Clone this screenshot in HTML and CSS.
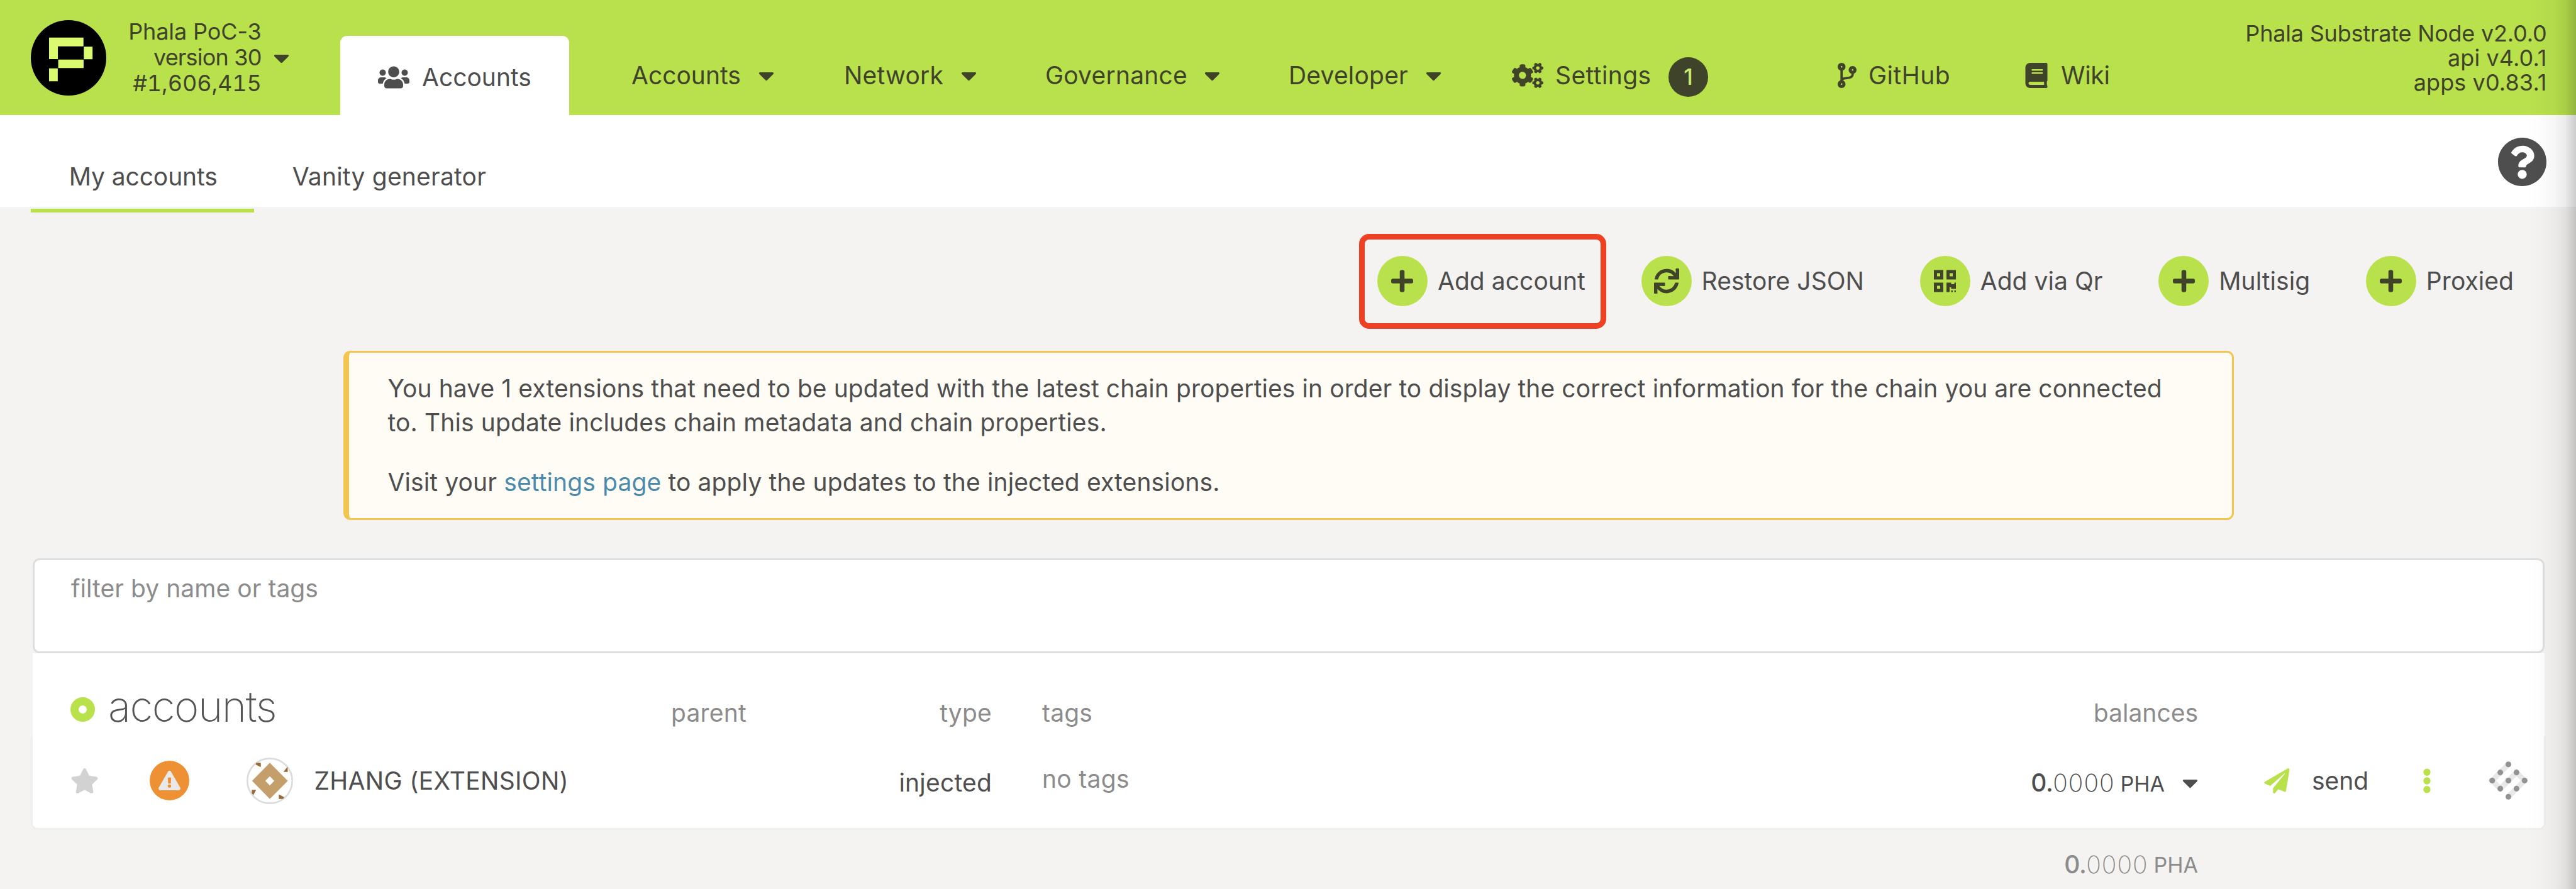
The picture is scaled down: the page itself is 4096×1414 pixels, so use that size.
FILE: index.html
```html
<!DOCTYPE html>
<html lang="en">
<head>
<meta charset="utf-8">
<title>Accounts</title>
<link rel="stylesheet" href="styles.css">
</head>
<body>
<svg class="sprite" aria-hidden="true">
  <symbol id="caret" viewBox="0 0 320 512"><path d="M31.3 192h257.3c17.8 0 26.7 21.5 14.1 34.1L174.1 354.8c-7.8 7.8-20.5 7.8-28.3 0L17.2 226.1C4.6 213.5 13.5 192 31.3 192z"/></symbol>
  <symbol id="plus" viewBox="0 0 448 512"><path d="M416 208H272V64c0-17.67-14.33-32-32-32h-32c-17.67 0-32 14.33-32 32v144H32c-17.67 0-32 14.33-32 32v32c0 17.67 14.33 32 32 32h144v144c0 17.67 14.33 32 32 32h32c17.67 0 32-14.33 32-32V304h144c17.67 0 32-14.33 32-32v-32c0-17.67-14.33-32-32-32z"/></symbol>
</svg>

<header class="topbar">
  <div class="brand">
    <svg class="logo" viewBox="68 44 168 168"><circle cx="152" cy="128" r="84"/><path class="logo-mark" d="M108.6 82.7h76.6v19.6h-56.9v28.4h-19.7zM186 103.2h19.4v28H186zM129 132h56.5v18.8H129zM108.6 151.6H128V180h-19.4z"/></svg>
    <div class="chain"><div class="t-phala">Phala PoC-3</div><div class="t-version">version 30</div><div class="t-block">#1,606,415</div></div>
    <svg class="caret"><use href="#caret"/></svg>
  </div>
  <nav class="nav">
    <a class="nav-tab"><svg class="i-users" viewBox="0 0 640 512"><path d="M96 224c35.3 0 64-28.7 64-64s-28.7-64-64-64-64 28.7-64 64 28.7 64 64 64zm448 0c35.3 0 64-28.7 64-64s-28.7-64-64-64-64 28.7-64 64 28.7 64 64 64zm32 32h-64c-17.6 0-33.5 7.1-45.1 18.6 40.3 22.1 68.9 62 75.1 109.4h66c17.7 0 32-14.3 32-32v-32c0-35.3-28.7-64-64-64zm-256 0c61.9 0 112-50.1 112-112S381.9 32 320 32 208 82.1 208 144s50.1 112 112 112zm76.8 32h-8.3c-20.8 10-43.9 16-68.5 16s-47.6-6-68.5-16h-8.3C179.6 288 128 339.6 128 403.2V432c0 26.5 21.5 48 48 48h288c26.5 0 48-21.5 48-48v-28.8c0-63.6-51.6-115.2-115.2-115.2zm-223.7-13.4C161.5 263.1 145.6 256 128 256H64c-35.3 0-64 28.7-64 64v32c0 17.7 14.3 32 32 32h65.9c6.3-47.4 34.9-87.3 75.2-109.4z"/></svg><span class="t-tab">Accounts</span></a>
    <a class="nav-item n-accounts"><span class="t-accounts">Accounts</span><svg class="caret"><use href="#caret"/></svg></a>
    <a class="nav-item n-network"><span class="t-network">Network</span><svg class="caret"><use href="#caret"/></svg></a>
    <a class="nav-item n-governance"><span class="t-governance">Governance</span><svg class="caret"><use href="#caret"/></svg></a>
    <a class="nav-item n-developer"><span class="t-developer">Developer</span><svg class="caret"><use href="#caret"/></svg></a>
    <a class="nav-item n-settings"><svg class="i-cogs" viewBox="0 0 640 512"><path id="cog-small" d="M512.1 191l-8.2 14.3c-3 5.3-9.4 7.5-15.1 5.4-11.8-4.4-22.6-10.7-32.1-18.6-4.6-3.8-5.8-10.5-2.8-15.7l8.2-14.3c-6.9-8-12.3-17.3-15.9-27.4h-16.5c-6 0-11.2-4.3-12.2-10.3-2-12-2.1-24.6 0-37.1 1-6 6.2-10.4 12.2-10.4h16.5c3.6-10.1 9-19.4 15.9-27.4l-8.2-14.3c-3-5.2-1.9-11.9 2.8-15.7 9.5-7.9 20.4-14.2 32.1-18.6 5.7-2.1 12.1.1 15.1 5.4l8.2 14.3c10.5-1.9 21.2-1.9 31.7 0L552 6.3c3-5.3 9.4-7.5 15.1-5.4 11.8 4.4 22.6 10.7 32.1 18.6 4.6 3.8 5.8 10.5 2.8 15.7l-8.2 14.3c6.9 8 12.3 17.3 15.9 27.4h16.5c6 0 11.2 4.3 12.2 10.3 2 12 2.1 24.6 0 37.1-1 6-6.2 10.4-12.2 10.4h-16.5c-3.6 10.1-9 19.4-15.9 27.4l8.2 14.3c3 5.2 1.9 11.9-2.8 15.7-9.5 7.9-20.4 14.2-32.1 18.6-5.7 2.1-12.1-.1-15.1-5.4l-8.2-14.3c-10.4 1.9-21.2 1.9-31.7 0zm-10.5-58.8c38.5 29.6 82.4-14.3 52.8-52.8-38.5-29.7-82.4 14.3-52.8 52.8z"/><use href="#cog-small" y="300"/><path d="M386.3 286.1l33.7 16.8c10.1 5.8 14.5 18.1 10.5 29.1-8.9 24.2-26.4 46.4-42.6 65.8-7.4 8.9-20.2 11.1-30.3 5.3l-29.1-16.8c-16 13.7-34.6 24.6-54.9 31.7v33.6c0 11.6-8.3 21.6-19.7 23.6-24.6 4.2-50.4 4.4-75.9 0-11.5-2-20-11.9-20-23.6V418c-20.3-7.2-38.9-18-54.9-31.7L74 403c-10 5.8-22.9 3.6-30.3-5.3-16.2-19.4-33.3-41.6-42.2-65.7-4-10.9.4-23.2 10.5-29.1l33.3-16.8c-3.9-20.9-3.9-42.4 0-63.4L12 205.8c-10.1-5.8-14.6-18.1-10.5-29 8.9-24.2 26-46.4 42.2-65.8 7.4-8.9 20.2-11.1 30.3-5.3l29.1 16.8c16-13.7 34.6-24.6 54.9-31.7V57.1c0-11.5 8.2-21.5 19.6-23.5 24.6-4.2 50.5-4.4 76-.1 11.5 2 20 11.9 20 23.6v33.6c20.3 7.2 38.9 18 54.9 31.7l29.1-16.8c10-5.8 22.9-3.6 30.3 5.3 16.2 19.4 33.2 41.6 42.1 65.8 4 10.9.1 23.2-10 29.1l-33.7 16.8c3.9 21 3.9 42.5 0 63.5zm-117.6 21.1c59.2-77-28.7-164.9-105.7-105.7-59.2 77 28.7 164.9 105.7 105.7z"/></svg><span class="t-settings">Settings</span><b class="badge">1</b></a>
    <a class="nav-item n-github"><svg class="i-branch" viewBox="0 0 384 512"><path d="M384 144c0-44.2-35.8-80-80-80s-80 35.8-80 80c0 36.4 24.3 67.1 57.5 76.8-.6 16.1-4.2 28.5-11 36.9-15.4 19.2-49.3 22.4-85.2 25.7-28.2 2.6-57.4 5.4-81.3 16.9v-144c32.5-10.2 56-40.5 56-76.3 0-44.2-35.8-80-80-80S0 35.8 0 80c0 35.8 23.5 66.1 56 76.3v199.3C23.5 365.9 0 396.2 0 432c0 44.2 35.8 80 80 80s80-35.8 80-80c0-34-21.2-63.1-51.2-74.6 3.1-5.2 7.8-9.8 14.9-13.4 16.2-8.2 40.4-10.4 66.1-12.8 42.2-3.9 90-8.4 118.2-43.4 14-17.4 21.1-39.8 21.6-67.9 31.6-10.8 54.4-40.7 54.4-75.9zM80 64c8.8 0 16 7.2 16 16s-7.2 16-16 16-16-7.2-16-16 7.2-16 16-16zm0 384c-8.8 0-16-7.2-16-16s7.2-16 16-16 16 7.2 16 16-7.2 16-16 16zm224-320c8.8 0 16 7.2 16 16s-7.2 16-16 16-16-7.2-16-16 7.2-16 16-16z"/></svg><span class="t-github">GitHub</span></a>
    <a class="nav-item n-wiki"><svg class="i-book" viewBox="0 0 448 512"><path d="M448 360V24c0-13.3-10.7-24-24-24H96C43 0 0 43 0 96v320c0 53 43 96 96 96h328c13.3 0 24-10.7 24-24v-16c0-7.5-3.5-14.3-8.9-18.7-4.2-15.4-4.2-59.3 0-74.7 5.4-4.3 8.9-11.1 8.9-18.6zM128 134c0-3.3 2.7-6 6-6h212c3.3 0 6 2.7 6 6v20c0 3.3-2.7 6-6 6H134c-3.3 0-6-2.7-6-6v-20zm0 64c0-3.3 2.7-6 6-6h212c3.3 0 6 2.7 6 6v20c0 3.3-2.7 6-6 6H134c-3.3 0-6-2.7-6-6v-20zm253.4 250H96c-17.7 0-32-14.3-32-32 0-17.6 14.4-32 32-32h285.4c-1.9 17.1-1.9 46.9 0 64z"/></svg><span class="t-wiki">Wiki</span></a>
  </nav>
  <div class="node-info"><div class="t-node">Phala Substrate Node v2.0.0</div><div class="t-api">api v4.0.1</div><div class="t-apps">apps v0.83.1</div></div>
</header>

<div class="tabs">
  <a class="tab is-active"><span class="t-my">My accounts</span></a>
  <a class="tab"><span class="t-vanity">Vanity generator</span></a>
  <svg class="help" viewBox="8 8 496 496"><path d="M504 256c0 136.997-111.043 248-248 248S8 392.997 8 256C8 119.083 119.043 8 256 8s248 111.083 248 248zM262.655 90c-54.497 0-89.255 22.957-116.549 63.758-3.536 5.286-2.353 12.415 2.715 16.258l34.699 26.31c5.205 3.947 12.621 3.008 16.665-2.122 17.864-22.658 30.113-35.797 57.303-35.797 20.429 0 45.698 13.148 45.698 32.958 0 14.976-12.363 22.667-32.534 33.976C247.128 238.528 216 254.941 216 296v4c0 6.627 5.373 12 12 12h56c6.627 0 12-5.373 12-12v-1.333c0-28.462 83.186-29.647 83.186-106.667 0-58.002-60.165-102-116.531-102zM256 338c-25.365 0-46 20.635-46 46 0 25.364 20.635 46 46 46s46-20.636 46-46c0-25.365-20.635-46-46-46z"/></svg>
</div>

<main>
  <div class="actions">
    <button class="action is-marked"><i class="disc"><svg class="i-plus"><use href="#plus"/></svg></i><span class="t-add">Add account</span></button>
    <button class="action"><i class="disc"><svg class="i-sync" viewBox="0 0 512 512"><path d="M440.65 12.57l4 82.77A247.16 247.16 0 0 0 255.83 8C134.73 8 33.91 94.92 12.29 209.82A12 12 0 0 0 24.09 224h49.05a12 12 0 0 0 11.67-9.26 175.91 175.91 0 0 1 317-56.94l-101.46-4.86a12 12 0 0 0-12.57 12v47.41a12 12 0 0 0 12 12H500a12 12 0 0 0 12-12V12a12 12 0 0 0-12-12h-47.37a12 12 0 0 0-11.98 12.57zM255.83 432a175.61 175.61 0 0 1-146-77.8l101.8 4.87a12 12 0 0 0 12.57-12v-47.4a12 12 0 0 0-12-12H12a12 12 0 0 0-12 12V500a12 12 0 0 0 12 12h47.35a12 12 0 0 0 12-12.6l-4.15-82.57A247.17 247.17 0 0 0 255.83 504c121.11 0 221.93-86.92 243.55-201.82a12 12 0 0 0-11.8-14.18h-49.05a12 12 0 0 0-11.67 9.26A175.86 175.86 0 0 1 255.83 432z"/></svg></i><span class="t-restore">Restore JSON</span></button>
    <button class="action"><i class="disc"><svg class="i-plus" viewBox="0 0 448 512"><path d="M0 224h192V32H0v192zM64 96h64v64H64V96zm192-64v192h192V32H256zm128 128h-64V96h64v64zM0 480h192V288H0v192zm64-128h64v64H64v-64zm352-64h32v128h-96v-32h-32v96h-64V288h96v32h64v-32zm0 160h32v32h-32v-32zm-64 0h32v32h-32v-32z"/></svg></i><span class="t-qr">Add via Qr</span></button>
    <button class="action"><i class="disc"><svg class="i-plus"><use href="#plus"/></svg></i><span class="t-multisig">Multisig</span></button>
    <button class="action"><i class="disc"><svg class="i-plus"><use href="#plus"/></svg></i><span class="t-proxied">Proxied</span></button>
  </div>

  <article class="warning">
    <p><span class="t-w1">You have 1 extensions that need to be updated with the latest chain properties in order to display the correct information for the chain you are connected</span><br><span class="t-w2">to. This update includes chain metadata and chain properties.</span></p>
    <p><span class="t-w3">Visit your <a>settings page</a> to apply the updates to the injected extensions.</span></p>
  </article>

  <section class="table">
    <div class="filter"><label class="t-filter">filter by name or tags</label></div>
    <div class="row head">
      <div class="cell-title"><i class="ring"></i><h1 class="t-heading">accounts</h1></div>
      <div><span class="t-parent">parent</span></div>
      <div class="right"><span class="t-type">type</span></div>
      <div class="cell-tags"><span class="t-tags">tags</span></div>
      <div class="right"><span class="t-balances">balances</span></div>
      <div></div>
    </div>
    <div class="row body">
      <div class="cell-name">
        <svg class="i-star" viewBox="0 0 576 512"><path d="M259.3 17.8L194 150.2 47.9 171.5c-26.2 3.8-36.7 36.1-17.7 54.6l105.7 103-25 145.5c-4.5 26.3 23.2 46 46.4 33.7L288 439.6l130.7 68.7c23.2 12.2 50.9-7.4 46.4-33.7l-25-145.5 105.7-103c19-18.5 8.5-50.8-17.7-54.6L382 150.2 316.7 17.8c-11.7-23.6-45.6-23.9-57.4 0z"/></svg>
        <i class="alert"><svg viewBox="0 0 576 512"><path d="M569.517 440.013C587.975 472.007 564.806 512 527.94 512H48.054c-36.937 0-59.999-40.055-41.577-71.987L246.423 23.985c18.467-32.009 64.72-31.951 83.154 0l239.94 416.028zM288 354c-25.405 0-46 20.595-46 46s20.595 46 46 46 46-20.595 46-46-20.595-46-46-46zm-43.673-165.346l7.418 136c.347 6.364 5.609 11.346 11.982 11.346h48.546c6.373 0 11.635-4.982 11.982-11.346l7.418-136c.375-6.874-5.098-12.654-11.982-12.654h-63.383c-6.884 0-12.356 5.78-11.981 12.654z"/></svg></i>
        <svg class="identicon" viewBox="685 43 310 310"><circle cx="840" cy="198" r="149.5" fill="#fff" stroke="#dcdcdc" stroke-width="11"/><path fill="#c59f6b" fill-rule="evenodd" d="M840 78L960 198 840 318 722 198zM840 168L810 198 840 228 870 198z"/><path fill="#946b37" d="M750 78h30v29l-34-18zM958 104l2 34h-29zM720 258h29l-18 34-11-12zM900 288l36 19-8 11h-28z"/></svg>
        <span class="t-name">ZHANG (EXTENSION)</span>
      </div>
      <div></div>
      <div class="right cell-type"><span class="t-injected">injected</span></div>
      <div class="cell-tags cell-notags"><span class="t-notags">no tags</span></div>
      <div class="right balance"><span class="t-int">0.</span><span class="t-dec">0000</span><span class="t-unit">PHA</span><svg class="caret"><use href="#caret"/></svg></div>
      <div class="cell-actions">
        <svg class="i-plane" viewBox="0 0 512 512"><path d="M476 3.2L12.5 270.6c-18.1 10.4-15.8 35.6 2.2 43.2L121 358.4l287.3-253.2c5.5-4.9 13.3 2.6 8.6 8.3L176 407v80.5c0 23.6 28.5 32.9 42.5 15.8L282 426l124.6 52.2c14.2 6 30.4-2.9 33-18.2l72-432C515 7.8 493.3-6.8 476 3.2z"/></svg>
        <span class="t-send">send</span>
        <svg class="i-dots" viewBox="0 0 12 40"><circle cx="6" cy="6.2" r="5.7"/><circle cx="6" cy="20" r="5.7"/><circle cx="6" cy="33.8" r="5.7"/></svg>
        <svg class="substrate" viewBox="60 30 264 264"><path fill="none" stroke="#e8e8e8" stroke-width="36" d="M192 54L84 162l54 54L246 108l54 54L192 270"/><g fill="#929292"><circle cx="192" cy="54" r="19"/><circle cx="138" cy="108" r="19"/><circle cx="246" cy="108" r="19"/><circle cx="84" cy="162" r="19"/><circle cx="192" cy="162" r="19"/><circle cx="300" cy="162" r="19"/><circle cx="138" cy="216" r="19"/><circle cx="246" cy="216" r="19"/><circle cx="192" cy="270" r="19"/></g></svg>
      </div>
    </div>
    <div class="row foot">
      <div></div><div></div><div></div><div></div>
      <div class="right balance"><span class="t-int">0.</span><span class="t-dec">0000</span><span class="t-unit">PHA</span></div>
      <div></div>
    </div>
  </section>
</main>
<div class="edge-shade"></div>
</body>
</html>
```
FILE: styles.css
```css
* { box-sizing: border-box; }

body {
  position: relative;
  margin: 0;
  width: 4096px;
  height: 1414px;
  overflow: hidden;
  background: #f4f3f1;
  color: #4e4e4e;
  font: 400 39px/50px Inter, "Liberation Sans", sans-serif;
  letter-spacing: 0.2px;
}

h1, p { margin: 0; font-weight: inherit; }
svg { display: block; fill: currentColor; flex: none; }
span, label { white-space: nowrap; }
button { font: inherit; color: inherit; letter-spacing: inherit; background: none; border: 0; padding: 0; }

.sprite { position: absolute; width: 0; height: 0; }
.caret { width: 25px; height: 40px; }

/* Top bar */
.topbar {
  display: flex;
  height: 183px;
  background: #b8e14c;
  color: #3f432a;
}
.brand { display: flex; align-items: center; width: 541px; padding-left: 48.7px; }
.logo { width: 120px; height: 120px; fill: #000; }
.logo-mark { fill: #dafb6f; }
.chain {
  width: 247px;
  margin-right: 19px;
  text-align: right;
  font-size: 36px;
  line-height: 41.3px;
  white-space: nowrap;
}
.t-phala { letter-spacing: -0.1px; }
.t-version { letter-spacing: -0.8px; }
.t-block { letter-spacing: -0.1px; font-variant-numeric: tabular-nums; }

.nav { display: flex; align-items: center; margin-top: 57px; height: 126px; }
.nav-tab {
  display: flex;
  align-items: center;
  width: 364px;
  height: 126px;
  padding: 6px 0 0 60px;
  border-radius: 11px 11px 0 0;
  background: #fff;
  color: #4e4e4e;
}
.i-users { width: 50px; height: 40px; margin-right: 20px; }
.nav-item { display: flex; align-items: center; justify-content: space-between; }
.n-accounts { width: 227px; margin-left: 99px; }
.n-network { width: 211px; margin-left: 111px; }
.n-governance { width: 278px; margin-left: 109px; }
.n-developer { width: 243px; margin-left: 109px; }
.n-settings { width: 312px; margin-left: 112px; justify-content: flex-start; }
.n-github { margin-left: 206px; width: 182px; justify-content: flex-start; }
.n-wiki { margin-left: 116px; justify-content: flex-start; }
.i-cogs { width: 50px; height: 40px; margin-right: 19px; }
.i-branch { width: 30px; height: 40px; margin-right: 19px; }
.i-book { width: 36px; height: 40px; margin-right: 21px; }
.t-tab, .t-accounts, .t-wiki { letter-spacing: 0; }
.t-wiki { letter-spacing: -0.3px; }
.t-settings { letter-spacing: 0.4px; }
.t-github { letter-spacing: 0.5px; }
.badge {
  width: 63px;
  height: 63px;
  margin: 5px 0 0 auto;
  border-radius: 50%;
  background: #3f432a;
  color: #cbe973;
  font-size: 35px;
  font-weight: 500;
  line-height: 63px;
  text-align: center;
}

.node-info {
  margin-left: auto;
  padding: 34px 46.5px 0 0;
  text-align: right;
  font-size: 36px;
  line-height: 39px;
  letter-spacing: -0.2px;
}
.t-api, .t-apps { letter-spacing: 0.1px; }

/* Sub navigation */
.tabs { display: flex; height: 146px; padding-left: 48.7px; background: #fff; }
.tab { height: 155px; padding: 73px 60px 0 61px; }
.tab.is-active { width: 355px; padding-right: 0; border-bottom: 6px solid #b8e14c; }
.t-my { letter-spacing: -0.1px; }
.help { width: 77px; height: 77px; margin: 36px 47px 0 auto; }

/* Account actions */
.actions { display: flex; justify-content: flex-end; gap: 88.7px; margin-top: 77.5px; padding-right: 99px; letter-spacing: 0.05px; }
.action { position: relative; display: flex; align-items: center; height: 80px; }
.disc {
  display: flex;
  align-items: center;
  justify-content: center;
  width: 80px;
  height: 80px;
  margin-right: 16px;
  border-radius: 50%;
  background: #b8e14c;
  color: #3f432a;
}
.i-plus { width: 35px; height: 40px; }
.i-sync { width: 40px; height: 40px; }
.is-marked::after {
  content: "";
  position: absolute;
  inset: -35px -33px -36px -29px;
  border: 9px solid #ee4023;
  border-radius: 16px;
}

/* Extension notice */
.warning {
  width: 3006px;
  height: 269px;
  margin: 71.5px 0 0 546px;
  padding: 30px 0 0 61.5px;
  border: 3px solid #f4c54e;
  border-left-width: 9px;
  border-radius: 11px;
  background: #fffcf5;
  line-height: 54.4px;
}
.warning p + p { margin-top: 40px; }
.warning a { color: #4a8bad; }
.t-w1 { letter-spacing: 0.08px; }
.t-w2, .t-w3 { letter-spacing: 0.12px; }

/* Accounts table */
.table { margin: 61px 48px 0 49px; }
.filter {
  height: 151px;
  margin: 0 2px 0 3px;
  padding: 20px 0 0 58px;
  border: 3px solid #dedede;
  border-radius: 11px;
  background: #fff;
  color: #8c8c8c;
}
.t-filter { letter-spacing: 0.05px; }
.row {
  display: grid;
  grid-template-columns: 1018px 260px 250px 1424px 494px 1fr;
  align-items: center;
}
.right { display: flex; justify-content: flex-end; align-items: center; }
.cell-tags { padding-left: 80px; }
.head {
  height: 132px;
  margin: 0 2px 0 3px;
  padding-top: 58px;
  background: #fff;
  color: #8c8c8c;
  grid-template-columns: 1015px 260px 250px 1424px 494px 1fr;
}
.cell-title { display: flex; align-items: center; margin-top: -20px; padding-left: 60px; }
.ring { width: 39px; height: 39px; margin: 8px 21px 0 0; border: 13.5px solid #b8e14c; border-radius: 50%; }
.t-heading { font-size: 67px; font-weight: 200; letter-spacing: -1.4px; color: #555; }
.t-balances { letter-spacing: 0; }
.body {
  height: 149px;
  padding-bottom: 5px;
  background: #fff;
  border: 0 solid #efefee;
  border-width: 0 3px 3px;
  border-radius: 0 0 11px 11px;
  grid-template-columns: 1015px 260px 250px 1424px 494px 1fr;
}
.cell-name { display: flex; align-items: center; padding-left: 60px; }
.i-star { width: 45px; height: 40px; color: #d2d2d2; }
.alert {
  display: flex;
  align-items: center;
  justify-content: center;
  width: 63px;
  height: 63px;
  margin-left: 81px;
  border-radius: 50%;
  background: #ee9134;
  color: #e9e9e9;
}
.alert svg { width: 35px; height: 31px; }
.identicon { width: 74px; height: 74px; margin: 0 33.5px 0 91px; }
.t-name { letter-spacing: 0.3px; }
.cell-type { padding-top: 6px; }
.cell-notags { padding-bottom: 6px; color: #8c8c8c; }
.t-notags { letter-spacing: 0.3px; }
.balance { padding-top: 7px; }
.t-int { font-weight: 500; letter-spacing: -0.4px; }
.t-dec { font-weight: 200; letter-spacing: 1px; }
.t-unit { margin-left: 9px; font-size: 34px; padding-top: 3px; letter-spacing: 0; }
.balance .caret { margin-left: 28px; }
.cell-actions { display: flex; align-items: center; padding-left: 105px; }
.i-plane { width: 41px; height: 40px; color: #b8e14c; }
.t-send { margin-left: 35px; letter-spacing: 0; }
.i-dots { width: 12px; height: 40px; margin-left: 87px; color: #b8e14c; }
.substrate { width: 63px; height: 63px; margin-left: 92px; }
.foot { height: 95px; padding-top: 7px; color: #8c8c8c; }

/* Shadow cast along the window's right edge */
.edge-shade {
  position: absolute;
  top: 0;
  right: 0;
  width: 80px;
  height: 1414px;
  background: linear-gradient(to right, rgba(0,0,0,0), rgba(0,0,0,.012) 30%, rgba(0,0,0,.03) 55%, rgba(0,0,0,.08) 78%, rgba(0,0,0,.2));
}
```
